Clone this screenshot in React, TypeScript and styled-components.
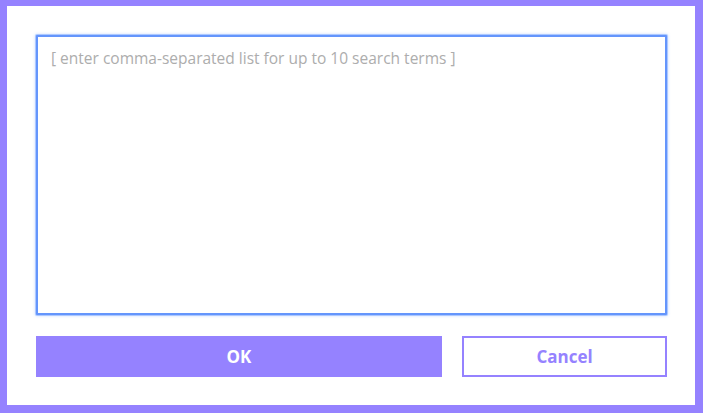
import { styled, createGlobalStyle } from 'styled-components';

const PURPLE = '#9582ff';

const GlobalStyle = createGlobalStyle`
  html, body {
    margin: 0;
    padding: 0;
    background: #ffffff;
  }
`;

export default function App() {
  return (
    <>
      <GlobalStyle />
      <Dialog>
        <TermsInput
          autoFocus
          placeholder="[ enter comma-separated list for up to 10 search terms ]"
        />
        <Actions>
          <Button $primary>OK</Button>
          <Button>Cancel</Button>
        </Actions>
      </Dialog>
    </>
  );
}

const Dialog = styled.div`
  box-sizing: border-box;
  width: 703px;
  height: 413px;
  border-style: solid;
  border-color: ${PURPLE};
  border-width: 6px 8px 8px 7px;
  background: #ffffff;
  padding: 29px 28px 28px 29px;
  display: flex;
  flex-direction: column;
  gap: 21px;
`;

const TermsInput = styled.textarea`
  box-sizing: border-box;
  width: 631px;
  height: 280px;
  margin: 0;
  padding: 10px 13px;
  resize: none;
  border: 2px solid #6495fc;
  border-radius: 1px;
  box-shadow: 0 0 0 1px rgba(110, 160, 255, 0.45), 0 0 3px 1px rgba(110, 160, 255, 0.35);
  outline: none;
  font-family: 'Open Sans', Lato, sans-serif;
  font-size: 15.5px;
  color: #444;

  &::placeholder {
    color: #adadad;
  }
`;

const Actions = styled.div`
  display: grid;
  grid-template-columns: 406px 205px;
  gap: 20px;
  height: 41px;
`;

const Button = styled.button<{ $primary?: boolean }>`
  box-sizing: border-box;
  margin: 0;
  height: 41px;
  border: 2px solid ${PURPLE};
  border-radius: 0;
  background: ${p => (p.$primary ? PURPLE : '#ffffff')};
  color: ${p => (p.$primary ? '#ffffff' : PURPLE)};
  font-family: 'Open Sans', Lato, sans-serif;
  font-weight: 700;
  font-size: 17px;
  cursor: pointer;
`;
